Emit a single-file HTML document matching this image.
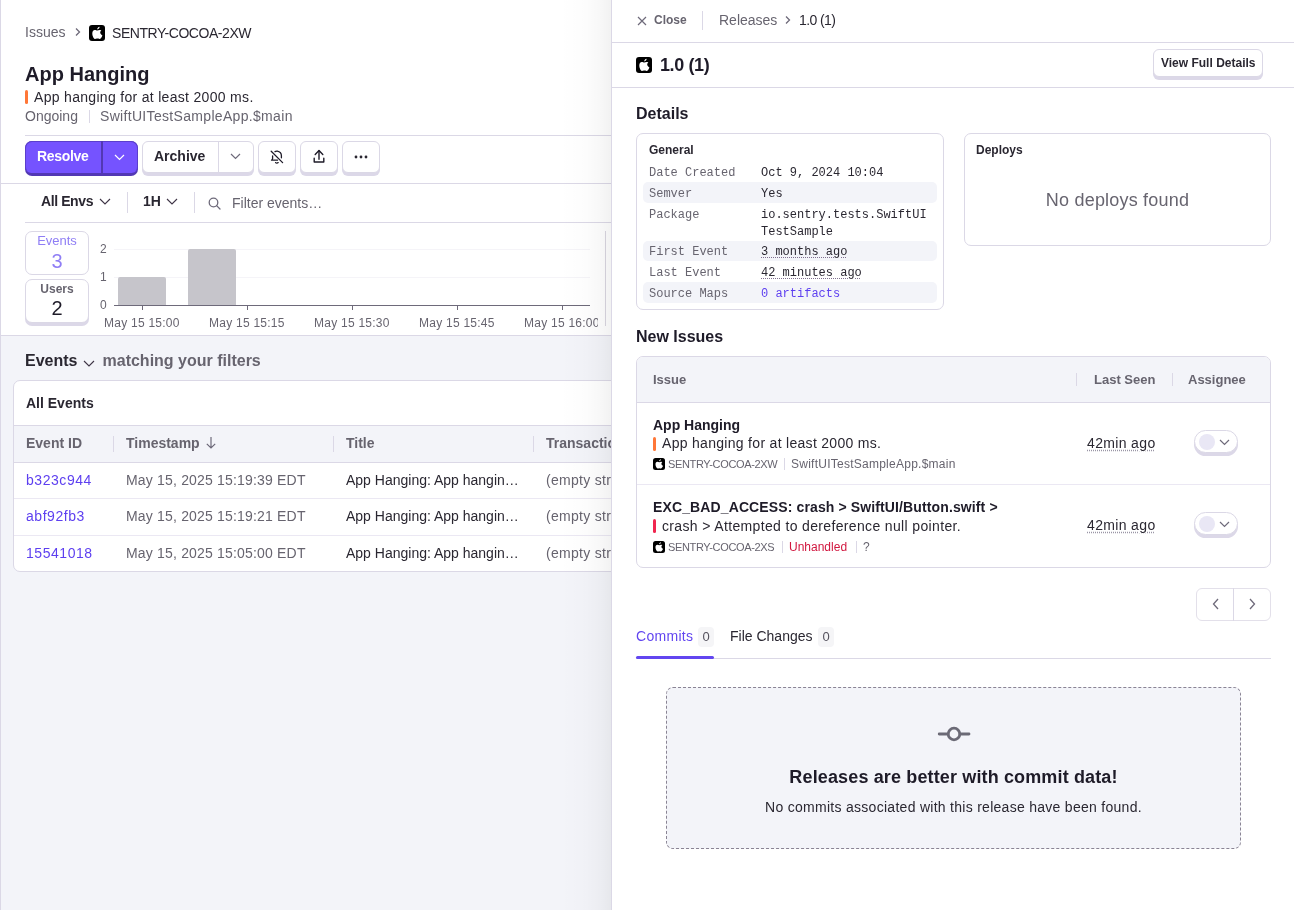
<!DOCTYPE html>
<html><head><meta charset="utf-8">
<style>
*{box-sizing:border-box;margin:0;padding:0}
html,body{width:1294px;height:910px;overflow:hidden;background:#fff}
body{font-family:"Liberation Sans",sans-serif;color:#2a2731;position:relative;-webkit-font-smoothing:antialiased}
.a{position:absolute;white-space:nowrap}
.mono{font-family:"Liberation Mono",monospace}
.g{color:#67646f}
.b{font-weight:700}
.hl{position:absolute;background:#dbd8e6}
.vl{position:absolute;background:#dbd8e6;width:1px}
.btn{position:absolute;background:#fff;border:1px solid #dbd8e6;border-radius:6px;box-shadow:0 3px 0 0 #dcd8e8}
svg{display:block}
</style></head><body>
<div id="wrap" style="position:absolute;left:0;top:0;width:1294px;height:910px;will-change:transform">

<!-- LEFT PANEL -->
<div id="left" class="a" style="left:0;top:0;width:612px;height:910px;overflow:hidden;background:#fff">
  <div class="a" style="left:0;top:0;width:1px;height:910px;background:#dbd8e6"></div>
  <!-- gray bottom -->
  <div class="a" style="left:1px;top:336px;width:611px;height:574px;background:#f3f4f9"></div>
  <div class="hl" style="left:1px;top:335px;width:611px;height:1px"></div>

  <!-- breadcrumb -->
  <div class="a g" style="left:25px;top:22px;font-size:14px;line-height:20px">Issues</div>
  <svg class="a" style="left:74px;top:27px" width="8" height="10" viewBox="0 0 8 10"><path d="M2 1.5L5.5 5L2 8.5" fill="none" stroke="#6e6a7a" stroke-width="1.3"/></svg>
  <div class="a" style="left:89px;top:25px;width:16px;height:16px;background:#000;border-radius:3px">
    <svg width="16" height="16" viewBox="0 0 16 16"><path fill="#fff" d="M8.3 5.6C7.6 5.6 6.8 5 5.8 5C4.3 5 3.3 6.4 3.3 8.4C3.3 10.9 4.8 14 6.2 14C6.9 14 7.3 13.6 8.3 13.6C9.3 13.6 9.6 14 10.4 14C11.6 14 12.8 12 13.4 10.4C12 9.8 11.2 8.7 11.2 7.6C11.2 6.6 11.8 5.9 12.4 5.5C11.8 5.1 11 5 10.6 5C9.7 5 9 5.6 8.3 5.6ZM8.2 4.4C8.2 3.2 9.2 2 10.6 1.8C10.7 3 9.6 4.3 8.2 4.4Z"/></svg>
  </div>
  <div class="a" style="left:112px;top:23px;font-size:14px;line-height:20px;color:#2a2731;letter-spacing:-0.45px">SENTRY-COCOA-2XW</div>

  <!-- title -->
  <div class="a b" style="left:25px;top:61px;font-size:20px;line-height:26px;color:#1e1b28">App Hanging</div>
  <div class="a" style="left:25px;top:90px;width:3px;height:14px;background:#ff7738;border-radius:2px"></div>
  <div class="a" style="left:34px;top:87px;font-size:14px;line-height:20px;letter-spacing:0.31px">App hanging for at least 2000 ms.</div>
  <div class="a g" style="left:25px;top:106px;font-size:14px;line-height:20px">Ongoing</div>
  <div class="vl" style="left:89px;top:110px;height:13px"></div>
  <div class="a g" style="left:100px;top:106px;font-size:14px;line-height:20px;letter-spacing:0.32px">SwiftUITestSampleApp.$main</div>

  <div class="hl" style="left:25px;top:135px;width:587px;height:1px"></div>

  <!-- buttons -->
  <div class="a" style="left:25px;top:141px;width:113px;height:35px;background:#5238b4;border-radius:7px"></div>
  <div class="a" style="left:25px;top:141px;width:113px;height:32px;background:#7553ff;border:1px solid #5b3fcc;border-bottom:none;border-radius:7px 7px 6px 6px"></div>
  <div class="a" style="left:101px;top:141px;width:1.5px;height:35px;background:#5238b4"></div>
  <div class="a b" style="left:37px;top:146px;font-size:14px;line-height:20px;color:#fff;letter-spacing:-0.3px">Resolve</div>
  <svg class="a" style="left:114px;top:154px" width="11" height="7" viewBox="0 0 11 7"><path d="M1 1L5.5 5.5L10 1" fill="none" stroke="#fff" stroke-width="1.2"/></svg>

  <div class="btn" style="left:142px;top:141px;width:112px;height:32px"></div>
  <div class="vl" style="left:218px;top:141px;height:32px"></div>
  <div class="a b" style="left:154px;top:146px;font-size:14px;line-height:20px">Archive</div>
  <svg class="a" style="left:230px;top:153px" width="11" height="7" viewBox="0 0 11 7"><path d="M1 1L5.5 5.5L10 1" fill="none" stroke="#6e6a7a" stroke-width="1.2"/></svg>

  <div class="btn" style="left:258px;top:141px;width:38px;height:32px"></div>
  <svg class="a" style="left:270px;top:150px" width="14" height="15" viewBox="0 0 14 15"><g fill="none" stroke="#1e1b28" stroke-width="1.3" stroke-linecap="round" stroke-linejoin="round"><path d="M1.2 1.2L12.6 12.6"/><path d="M5 1.6C5.6 1.2 6.4 1 7.3 1.1C9.6 1.5 11.4 3.4 11.4 5.8V7.8"/><path d="M2.6 5.8V8.6C2.6 9.4 2 9.9 1.5 10.2H7.5"/><path d="M5.6 12.6C6.2 13.3 7.4 13.3 8.2 12.6"/></g></svg>
  <div class="btn" style="left:300px;top:141px;width:38px;height:32px"></div>
  <svg class="a" style="left:312px;top:149px" width="14" height="15" viewBox="0 0 14 15"><g fill="none" stroke="#1e1b28" stroke-width="1.4" stroke-linecap="round" stroke-linejoin="round"><path d="M7 1.6V10.2"/><path d="M3.2 5.4L7 1.6L10.8 5.4"/><path d="M2.2 9.2V13H11.8V9.2"/></g></svg>
  <div class="btn" style="left:342px;top:141px;width:38px;height:32px"></div>
  <svg class="a" style="left:353px;top:155px" width="16" height="4" viewBox="0 0 16 4"><g fill="#2a2731"><circle cx="3" cy="2" r="1.4"/><circle cx="8" cy="2" r="1.4"/><circle cx="13" cy="2" r="1.4"/></g></svg>

  <div class="hl" style="left:0;top:183px;width:612px;height:1px"></div>

  <!-- filter row -->
  <div class="a b" style="left:41px;top:191px;font-size:14px;line-height:20px;letter-spacing:-0.4px">All Envs</div>
  <svg class="a" style="left:99px;top:198px" width="12" height="7" viewBox="0 0 12 7"><path d="M1 1L6 6L11 1" fill="none" stroke="#3e3446" stroke-width="1.1"/></svg>
  <div class="vl" style="left:127px;top:192px;height:21px"></div>
  <div class="a b" style="left:143px;top:191px;font-size:14px;line-height:20px">1H</div>
  <svg class="a" style="left:166px;top:198px" width="12" height="7" viewBox="0 0 12 7"><path d="M1 1L6 6L11 1" fill="none" stroke="#3e3446" stroke-width="1.1"/></svg>
  <div class="vl" style="left:194px;top:192px;height:21px"></div>
  <svg class="a" style="left:208px;top:197px" width="13" height="13" viewBox="0 0 13 13"><g fill="none" stroke="#6e6a7a" stroke-width="1.3"><circle cx="5.5" cy="5.5" r="4.3"/><path d="M8.6 8.6L12 12" stroke-linecap="round"/></g></svg>
  <div class="a g" style="left:232px;top:193px;font-size:14px;line-height:20px">Filter events…</div>

  <div class="hl" style="left:25px;top:222px;width:587px;height:1px"></div>

  <!-- stats boxes -->
  <div class="btn" style="left:25px;top:231px;width:64px;height:44px;box-shadow:none;border-radius:7px"></div>
  <div class="a" style="left:25px;top:232.5px;width:64px;text-align:center;font-size:13px;line-height:16px;color:#8f7ef5">Events</div>
  <div class="a" style="left:25px;top:249px;width:64px;text-align:center;font-size:20px;line-height:24px;color:#8f7ef5">3</div>
  <div class="btn" style="left:25px;top:279px;width:64px;height:44px;border-radius:7px"></div>
  <div class="a b g" style="left:25px;top:281px;width:64px;text-align:center;font-size:12px;line-height:16px">Users</div>
  <div class="a" style="left:25px;top:296px;width:64px;text-align:center;font-size:20px;line-height:24px;color:#1e1b28">2</div>

  <!-- chart -->
  <div class="a g" style="left:100px;top:241px;font-size:12px;line-height:16px">2</div>
  <div class="a g" style="left:100px;top:269px;font-size:12px;line-height:16px">1</div>
  <div class="a g" style="left:100px;top:297px;font-size:12px;line-height:16px">0</div>
  <div class="hl" style="left:114px;top:249px;width:476px;height:1px;background:#f5f4f8"></div>
  <div class="hl" style="left:114px;top:277px;width:476px;height:1px;background:#f5f4f8"></div>
  <div class="a" style="left:118px;top:277px;width:48px;height:28px;background:#c6c5cb;border-radius:2px 2px 0 0"></div>
  <div class="a" style="left:188px;top:249px;width:48px;height:56px;background:#c6c5cb;border-radius:2px 2px 0 0"></div>
  <div class="a" style="left:114px;top:305px;width:476px;height:1px;background:#6e6a7a"></div>
  <div class="a" style="left:142px;top:305px;width:1px;height:5px;background:#6e6a7a"></div>
  <div class="a" style="left:247px;top:305px;width:1px;height:5px;background:#6e6a7a"></div>
  <div class="a" style="left:352px;top:305px;width:1px;height:5px;background:#6e6a7a"></div>
  <div class="a" style="left:457px;top:305px;width:1px;height:5px;background:#6e6a7a"></div>
  <div class="a" style="left:562px;top:305px;width:1px;height:5px;background:#6e6a7a"></div>
  <div class="a g" style="left:104px;top:315px;font-size:12px;line-height:16px;letter-spacing:0.25px">May 15 15:00</div>
  <div class="a g" style="left:209px;top:315px;font-size:12px;line-height:16px;letter-spacing:0.25px">May 15 15:15</div>
  <div class="a g" style="left:314px;top:315px;font-size:12px;line-height:16px;letter-spacing:0.25px">May 15 15:30</div>
  <div class="a g" style="left:419px;top:315px;font-size:12px;line-height:16px;letter-spacing:0.25px">May 15 15:45</div>
  <div class="a g" style="left:524px;top:315px;width:74px;overflow:hidden;font-size:12px;line-height:16px;letter-spacing:0.25px">May 15 16:00</div>
  <div class="vl" style="left:605px;top:231px;height:95px;background:#d9d6e0"></div>

  <!-- events section -->
  <div class="a b" style="left:25px;top:349.5px;font-size:16px;line-height:22px">Events</div>
  <svg class="a" style="left:83px;top:360px" width="12" height="7" viewBox="0 0 12 7"><path d="M1 1L6 6L11 1" fill="none" stroke="#3e3446" stroke-width="1.1"/></svg>
  <div class="a b g" style="left:102.5px;top:349.5px;font-size:16px;line-height:22px">matching your filters</div>

  <div class="a" style="left:13px;top:380px;width:620px;height:192px;background:#fff;border:1px solid #dbd8e6;border-radius:7px;overflow:hidden">
    <div class="a b" style="left:12px;top:12px;font-size:14px;line-height:20px">All Events</div>
    <div class="a" style="left:0;top:44px;width:620px;height:38px;background:#f3f4f9;border-top:1px solid #dbd8e6;border-bottom:1px solid #dbd8e6"></div>
    <div class="a b g" style="left:12px;top:52px;font-size:14px;line-height:20px">Event ID</div>
    <div class="vl" style="left:99px;top:55px;height:16px"></div>
    <div class="a b g" style="left:112px;top:52px;font-size:14px;line-height:20px">Timestamp</div>
    <svg class="a" style="left:191px;top:55px" width="12" height="13" viewBox="0 0 12 13"><path d="M6 1v11M1.8 7.8L6 12l4.2-4.2" fill="none" stroke="#6e6a7a" stroke-width="1.2"/></svg>
    <div class="vl" style="left:319px;top:55px;height:16px"></div>
    <div class="a b g" style="left:332px;top:52px;font-size:14px;line-height:20px">Title</div>
    <div class="vl" style="left:519px;top:55px;height:16px"></div>
    <div class="a b g" style="left:532px;top:52px;font-size:14px;line-height:20px">Transaction</div>

    <div class="a" style="left:12px;top:89px;font-size:14px;line-height:20px;color:#5d3ff0;letter-spacing:0.55px">b323c944</div>
    <div class="a g" style="left:112px;top:89px;font-size:14px;line-height:20px;letter-spacing:0.18px">May 15, 2025 15:19:39 EDT</div>
    <div class="a" style="left:332px;top:89px;font-size:14px;line-height:20px">App Hanging: App hangin…</div>
    <div class="a g" style="left:532px;top:89px;font-size:14px;line-height:20px;letter-spacing:0.3px">(empty string)</div>
    <div class="hl" style="left:0;top:117px;width:620px;height:1px;background:#ebe8f3"></div>
    <div class="a" style="left:12px;top:125px;font-size:14px;line-height:20px;color:#5d3ff0;letter-spacing:0.55px">abf92fb3</div>
    <div class="a g" style="left:112px;top:125px;font-size:14px;line-height:20px;letter-spacing:0.18px">May 15, 2025 15:19:21 EDT</div>
    <div class="a" style="left:332px;top:125px;font-size:14px;line-height:20px">App Hanging: App hangin…</div>
    <div class="a g" style="left:532px;top:125px;font-size:14px;line-height:20px;letter-spacing:0.3px">(empty string)</div>
    <div class="hl" style="left:0;top:154px;width:620px;height:1px;background:#ebe8f3"></div>
    <div class="a" style="left:12px;top:162px;font-size:14px;line-height:20px;color:#5d3ff0;letter-spacing:0.55px">15541018</div>
    <div class="a g" style="left:112px;top:162px;font-size:14px;line-height:20px;letter-spacing:0.18px">May 15, 2025 15:05:00 EDT</div>
    <div class="a" style="left:332px;top:162px;font-size:14px;line-height:20px">App Hanging: App hangin…</div>
    <div class="a g" style="left:532px;top:162px;font-size:14px;line-height:20px;letter-spacing:0.3px">(empty string)</div>
  </div>

  <!-- drawer shadow -->
  <div class="a" style="left:560px;top:0;width:52px;height:910px;background:linear-gradient(to right,rgba(0,0,0,0) 0%,rgba(0,0,0,0.012) 50%,rgba(0,0,0,0.03) 80%,rgba(0,0,0,0.055) 100%)"></div>
</div>


<!-- DRAWER -->
<div id="drawer" class="a" style="left:611px;top:0;width:683px;height:910px;background:#fff;border-left:1px solid #dbd8e6"></div>

<!-- header row 1 -->
<svg class="a" style="left:637px;top:16px" width="10" height="10" viewBox="0 0 10 10"><path d="M1 1L9 9M9 1L1 9" fill="none" stroke="#6e6a7a" stroke-width="1.2"/></svg>
<div class="a b g" style="left:654px;top:11.5px;font-size:12px;line-height:16px">Close</div>
<div class="vl" style="left:702px;top:11px;height:19px"></div>
<div class="a g" style="left:719px;top:10px;font-size:14px;line-height:20px">Releases</div>
<svg class="a" style="left:784px;top:15px" width="8" height="10" viewBox="0 0 8 10"><path d="M2 1.5L5.5 5L2 8.5" fill="none" stroke="#6e6a7a" stroke-width="1.3"/></svg>
<div class="a" style="left:799px;top:10px;font-size:14px;line-height:20px;letter-spacing:-0.6px">1.0 (1)</div>
<div class="hl" style="left:612px;top:42px;width:682px;height:1px"></div>

<!-- header row 2 -->
<div class="a" style="left:636px;top:57px;width:16px;height:16px;background:#000;border-radius:3px">
  <svg width="16" height="16" viewBox="0 0 16 16"><path fill="#fff" d="M8.3 5.6C7.6 5.6 6.8 5 5.8 5C4.3 5 3.3 6.4 3.3 8.4C3.3 10.9 4.8 14 6.2 14C6.9 14 7.3 13.6 8.3 13.6C9.3 13.6 9.6 14 10.4 14C11.6 14 12.8 12 13.4 10.4C12 9.8 11.2 8.7 11.2 7.6C11.2 6.6 11.8 5.9 12.4 5.5C11.8 5.1 11 5 10.6 5C9.7 5 9 5.6 8.3 5.6ZM8.2 4.4C8.2 3.2 9.2 2 10.6 1.8C10.7 3 9.6 4.3 8.2 4.4Z"/></svg>
</div>
<div class="a b" style="left:660px;top:52.5px;font-size:18px;line-height:24px;letter-spacing:-0.4px;color:#1e1b28">1.0 (1)</div>
<div class="btn" style="left:1153px;top:49px;width:110px;height:28px"></div>
<div class="a b" style="left:1161px;top:55px;font-size:12px;line-height:16px">View Full Details</div>
<div class="hl" style="left:612px;top:87px;width:682px;height:1px"></div>

<!-- Details -->
<div class="a b" style="left:636px;top:102.5px;font-size:16px;line-height:22px;color:#1e1b28">Details</div>

<div class="a" style="left:636px;top:133px;width:308px;height:177px;border:1px solid #dbd8e6;border-radius:7px"></div>
<div class="a b" style="left:649px;top:141.5px;font-size:12px;line-height:16px">General</div>
<div class="a" style="left:643px;top:182px;width:294px;height:21px;background:#f3f4f9;border-radius:5px"></div>
<div class="a" style="left:643px;top:240.5px;width:294px;height:20.5px;background:#f3f4f9;border-radius:5px"></div>
<div class="a" style="left:643px;top:282px;width:294px;height:21px;background:#f3f4f9;border-radius:5px"></div>
<div class="a mono g" style="left:649px;top:165px;font-size:12px;line-height:16px">Date Created</div>
<div class="a mono" style="left:761px;top:165px;font-size:12px;line-height:16px">Oct 9, 2024 10:04</div>
<div class="a mono g" style="left:649px;top:186px;font-size:12px;line-height:16px">Semver</div>
<div class="a mono" style="left:761px;top:186px;font-size:12px;line-height:16px">Yes</div>
<div class="a mono g" style="left:649px;top:207px;font-size:12px;line-height:16px">Package</div>
<div class="a mono" style="left:761px;top:207px;font-size:12px;line-height:16.5px">io.sentry.tests.SwiftUI<br>TestSample</div>
<div class="a mono g" style="left:649px;top:244px;font-size:12px;line-height:16px">First Event</div>
<div class="a mono" style="left:761px;top:244px;font-size:12px;line-height:16px;text-decoration:underline dotted #80708f;text-underline-offset:2px">3 months ago</div>
<div class="a mono g" style="left:649px;top:265px;font-size:12px;line-height:16px">Last Event</div>
<div class="a mono" style="left:761px;top:265px;font-size:12px;line-height:16px;text-decoration:underline dotted #80708f;text-underline-offset:2px">42 minutes ago</div>
<div class="a mono g" style="left:649px;top:286px;font-size:12px;line-height:16px">Source Maps</div>
<div class="a mono" style="left:761px;top:286px;font-size:12px;line-height:16px;color:#5d3ff0">0 artifacts</div>

<div class="a" style="left:964px;top:133px;width:307px;height:113px;border:1px solid #dbd8e6;border-radius:7px"></div>
<div class="a b" style="left:976px;top:142px;font-size:12px;line-height:16px">Deploys</div>
<div class="a g" style="left:964px;top:187.5px;width:307px;text-align:center;font-size:18px;line-height:24px;letter-spacing:0.2px">No deploys found</div>

<!-- New Issues -->
<div class="a b" style="left:636px;top:325.5px;font-size:16px;line-height:22px;color:#1e1b28">New Issues</div>
<div class="a" style="left:636px;top:356px;width:635px;height:212px;border:1px solid #dbd8e6;border-radius:7px;overflow:hidden">
  <div class="a" style="left:0;top:0;width:635px;height:46px;background:#f3f4f9;border-bottom:1px solid #dbd8e6"></div>
</div>
<div class="a b g" style="left:653px;top:369.5px;font-size:13px;line-height:20px">Issue</div>
<div class="vl" style="left:1076px;top:373px;height:13px"></div>
<div class="a b g" style="left:1094px;top:369.5px;font-size:13px;line-height:20px">Last Seen</div>
<div class="vl" style="left:1172px;top:373px;height:13px"></div>
<div class="a b g" style="left:1188px;top:369.5px;font-size:13px;line-height:20px">Assignee</div>

<div class="a b" style="left:653px;top:415px;font-size:14px;line-height:20px;color:#1e1b28">App Hanging</div>
<div class="a" style="left:653px;top:437px;width:3px;height:13.5px;background:#ff7738;border-radius:2px"></div>
<div class="a" style="left:662px;top:432.5px;font-size:14px;line-height:20px;letter-spacing:0.3px">App hanging for at least 2000 ms.</div>
<div class="a" style="left:653px;top:458px;width:12px;height:12px;background:#000;border-radius:2.5px">
  <svg width="12" height="12" viewBox="0 0 16 16"><path fill="#fff" d="M8.3 5.6C7.6 5.6 6.8 5 5.8 5C4.3 5 3.3 6.4 3.3 8.4C3.3 10.9 4.8 14 6.2 14C6.9 14 7.3 13.6 8.3 13.6C9.3 13.6 9.6 14 10.4 14C11.6 14 12.8 12 13.4 10.4C12 9.8 11.2 8.7 11.2 7.6C11.2 6.6 11.8 5.9 12.4 5.5C11.8 5.1 11 5 10.6 5C9.7 5 9 5.6 8.3 5.6ZM8.2 4.4C8.2 3.2 9.2 2 10.6 1.8C10.7 3 9.6 4.3 8.2 4.4Z"/></svg>
</div>
<div class="a g" style="left:668px;top:456px;font-size:11px;line-height:16px;letter-spacing:-0.35px">SENTRY-COCOA-2XW</div>
<div class="vl" style="left:784px;top:458px;height:12px"></div>
<div class="a g" style="left:791px;top:455.5px;font-size:12px;line-height:16px;letter-spacing:0.25px">SwiftUITestSampleApp.$main</div>
<div class="a" style="left:1087px;top:433px;font-size:14px;line-height:20px;letter-spacing:0.35px;text-decoration:underline dotted #9a96a6;text-underline-offset:2px">42min ago</div>
<div class="btn" style="left:1194px;top:430px;width:44px;height:23px;border-radius:12px"></div>
<div class="a" style="left:1199px;top:434px;width:16px;height:16px;border-radius:50%;background:#e9e7f5"></div>
<svg class="a" style="left:1219px;top:439px" width="11" height="7" viewBox="0 0 11 7"><path d="M1 1L5.5 5.5L10 1" fill="none" stroke="#6e6a7a" stroke-width="1.2"/></svg>

<div class="hl" style="left:637px;top:484px;width:633px;height:1px;background:#ebe8f3"></div>

<div class="a b" style="left:653px;top:497px;font-size:14px;line-height:20px;color:#1e1b28;letter-spacing:0.12px">EXC_BAD_ACCESS: crash &gt; SwiftUI/Button.swift &gt;</div>
<div class="a" style="left:653px;top:519px;width:3px;height:14px;background:#f0264f;border-radius:2px"></div>
<div class="a" style="left:662px;top:515.5px;font-size:14px;line-height:20px;letter-spacing:0.35px">crash &gt; Attempted to dereference null pointer.</div>
<div class="a" style="left:653px;top:541px;width:12px;height:12px;background:#000;border-radius:2.5px">
  <svg width="12" height="12" viewBox="0 0 16 16"><path fill="#fff" d="M8.3 5.6C7.6 5.6 6.8 5 5.8 5C4.3 5 3.3 6.4 3.3 8.4C3.3 10.9 4.8 14 6.2 14C6.9 14 7.3 13.6 8.3 13.6C9.3 13.6 9.6 14 10.4 14C11.6 14 12.8 12 13.4 10.4C12 9.8 11.2 8.7 11.2 7.6C11.2 6.6 11.8 5.9 12.4 5.5C11.8 5.1 11 5 10.6 5C9.7 5 9 5.6 8.3 5.6ZM8.2 4.4C8.2 3.2 9.2 2 10.6 1.8C10.7 3 9.6 4.3 8.2 4.4Z"/></svg>
</div>
<div class="a g" style="left:668px;top:539px;font-size:11px;line-height:16px;letter-spacing:-0.35px">SENTRY-COCOA-2XS</div>
<div class="vl" style="left:782px;top:541px;height:12px"></div>
<div class="a" style="left:789px;top:538.5px;font-size:12px;line-height:16px;color:#d1173f">Unhandled</div>
<div class="vl" style="left:856px;top:541px;height:12px"></div>
<div class="a g" style="left:863px;top:538.5px;font-size:12px;line-height:16px">?</div>
<div class="a" style="left:1087px;top:515px;font-size:14px;line-height:20px;letter-spacing:0.35px;text-decoration:underline dotted #9a96a6;text-underline-offset:2px">42min ago</div>
<div class="btn" style="left:1194px;top:512px;width:44px;height:23px;border-radius:12px"></div>
<div class="a" style="left:1199px;top:516px;width:16px;height:16px;border-radius:50%;background:#e9e7f5"></div>
<svg class="a" style="left:1219px;top:521px" width="11" height="7" viewBox="0 0 11 7"><path d="M1 1L5.5 5.5L10 1" fill="none" stroke="#6e6a7a" stroke-width="1.2"/></svg>

<!-- pagination -->
<div class="a" style="left:1196px;top:588px;width:75px;height:33px;border:1px solid #e3e0ea;border-bottom-width:1.5px;border-radius:6px"></div>
<div class="vl" style="left:1233px;top:588px;height:33px"></div>
<svg class="a" style="left:1211.5px;top:598px" width="8" height="12" viewBox="0 0 8 12"><path d="M6 1L1.5 6L6 11" fill="none" stroke="#6e6a7a" stroke-width="1.3"/></svg>
<svg class="a" style="left:1248px;top:598px" width="8" height="12" viewBox="0 0 8 12"><path d="M2 1L6.5 6L2 11" fill="none" stroke="#6e6a7a" stroke-width="1.3"/></svg>

<!-- tabs -->
<div class="a" style="left:636px;top:626px;font-size:14px;line-height:20px;color:#6246f0;letter-spacing:0.3px">Commits</div>
<div class="a" style="left:698px;top:627px;width:16px;height:20px;background:#f5f5f7;border-radius:4px;text-align:center;font-size:13px;line-height:19px;color:#55525e">0</div>
<div class="a" style="left:730px;top:626px;font-size:14px;line-height:20px">File Changes</div>
<div class="a" style="left:818px;top:627px;width:16px;height:20px;background:#f5f5f7;border-radius:4px;text-align:center;font-size:13px;line-height:19px;color:#55525e">0</div>
<div class="hl" style="left:636px;top:658px;width:635px;height:1px"></div>
<div class="a" style="left:636px;top:656px;width:78px;height:3px;background:#6246f0;border-radius:2px"></div>

<!-- empty state -->
<div class="a" style="left:666px;top:687px;width:575px;height:162px;border:1px dashed #8a8494;border-radius:7px;background:#f3f4f9"></div>
<svg class="a" style="left:936px;top:724px" width="36" height="20" viewBox="0 0 36 20"><g fill="none" stroke="#6b6a76" stroke-width="2.8" stroke-linecap="round"><circle cx="18" cy="10" r="5.8"/><path d="M3.2 10H12M24 10H33"/></g></svg>
<div class="a b" style="left:666px;top:765px;width:575px;text-align:center;font-size:18px;line-height:24px;color:#1e1b28;letter-spacing:0.14px">Releases are better with commit data!</div>
<div class="a" style="left:666px;top:797px;width:575px;text-align:center;font-size:14px;line-height:20px;letter-spacing:0.28px">No commits associated with this release have been found.</div>
</div>
</body></html>
